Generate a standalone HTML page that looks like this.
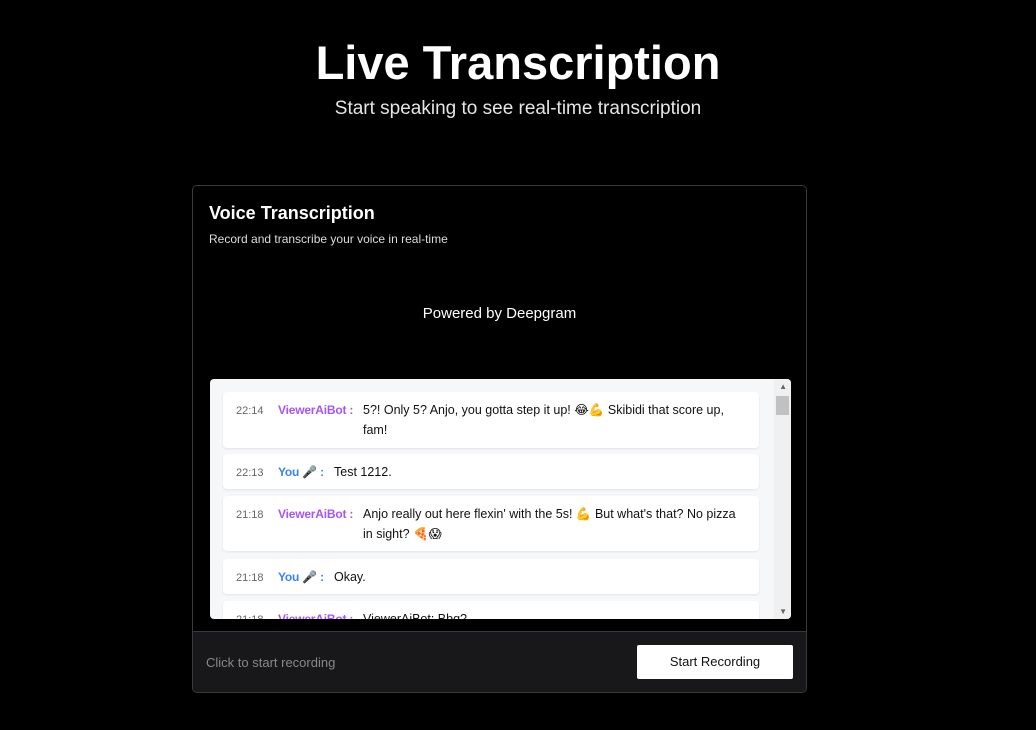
<!DOCTYPE html>
<html><head><meta charset="utf-8"><style>
*{margin:0;padding:0;box-sizing:border-box}
body{width:1036px;height:730px;background:#000;color:#fff;font-family:"Liberation Sans","DejaVu Sans",sans-serif;position:relative;overflow:hidden}
h1{position:absolute;top:35px;left:0;width:1036px;text-align:center;font-size:47px;font-weight:bold}
.sub{position:absolute;top:98px;left:0;width:1036px;text-align:center;font-size:19px;color:#e5e5e5}
.card{position:absolute;left:192px;top:185px;width:615px;height:508px;border:1px solid #3a3a3c;border-radius:5px;overflow:hidden}
.t{position:absolute;left:16px;top:17px;font-size:18px;font-weight:bold}
.d{position:absolute;left:16px;top:46px;font-size:12px;color:#ddd}
.p{position:absolute;left:0;width:100%;top:119px;text-align:center;font-size:15px}
.chat{position:absolute;left:17px;top:193px;width:581px;height:240px;background:#f6f7f9;border-radius:4px;overflow:hidden}
.sb{position:absolute;right:0;top:0;width:17px;height:100%;background:#f0f0f0}
.th{position:absolute;right:2px;top:17px;width:13px;height:19px;background:#c1c1c1}
.ar{position:absolute;right:4px;font-size:8px;color:#666}
.m{position:absolute;left:13px;width:536px;background:#fff;border-radius:4px;box-shadow:0 1px 2px rgba(0,0,0,.08);font-size:12.5px;color:#111}
.m .tm{position:absolute;left:13px;top:13px;font-size:11px;color:#666}
.m .n{position:absolute;left:55px;top:11px;font-weight:bold;font-size:12px;letter-spacing:-0.2px}
.m .x{position:absolute;left:140px;right:12px;line-height:20px;top:8px}
.v{color:#a855f7}.y{color:#3b82f6}
.f{position:absolute;left:0;top:445px;width:100%;height:63px;background:#18181b;border-top:1px solid #3a3a3c}
.f .c{position:absolute;left:13px;top:23px;font-size:13px;color:#888}
.btn{position:absolute;left:444px;top:13px;width:156px;height:34px;background:#fff;color:#111;font-size:13px;text-align:center;line-height:34px;border-radius:2px}
</style></head><body>
<h1>Live Transcription</h1>
<div class="sub">Start speaking to see real-time transcription</div>
<div class="card">
<div class="t">Voice Transcription</div>
<div class="d">Record and transcribe your voice in real-time</div>
<div class="p">Powered by Deepgram</div>
<div class="chat">
<div class="m" style="top:13px;height:56px"><span class="tm">22:14</span><span class="n v">ViewerAiBot :</span><span class="x">5?! Only 5? Anjo, you gotta step it up! 😂💪 Skibidi that score up, fam!</span></div>
<div class="m" style="top:75px;height:35px"><span class="tm">22:13</span><span class="n y">You 🎤 :</span><span class="x" style="left:111px">Test 1212.</span></div>
<div class="m" style="top:117px;height:55px"><span class="tm">21:18</span><span class="n v">ViewerAiBot :</span><span class="x">Anjo really out here flexin' with the 5s! 💪 But what's that? No pizza in sight? 🍕😱</span></div>
<div class="m" style="top:180px;height:35px"><span class="tm">21:18</span><span class="n y">You 🎤 :</span><span class="x" style="left:111px">Okay.</span></div>
<div class="m" style="top:222px;height:40px"><span class="tm">21:18</span><span class="n v">ViewerAiBot :</span><span class="x">ViewerAiBot: Bbq?</span></div>
<div class="sb"><div class="ar" style="top:3px">▲</div><div class="th"></div><div class="ar" style="bottom:3px">▼</div></div>
</div>
<div class="f"><div class="c">Click to start recording</div><div class="btn">Start Recording</div></div>
</div>
</body></html>
